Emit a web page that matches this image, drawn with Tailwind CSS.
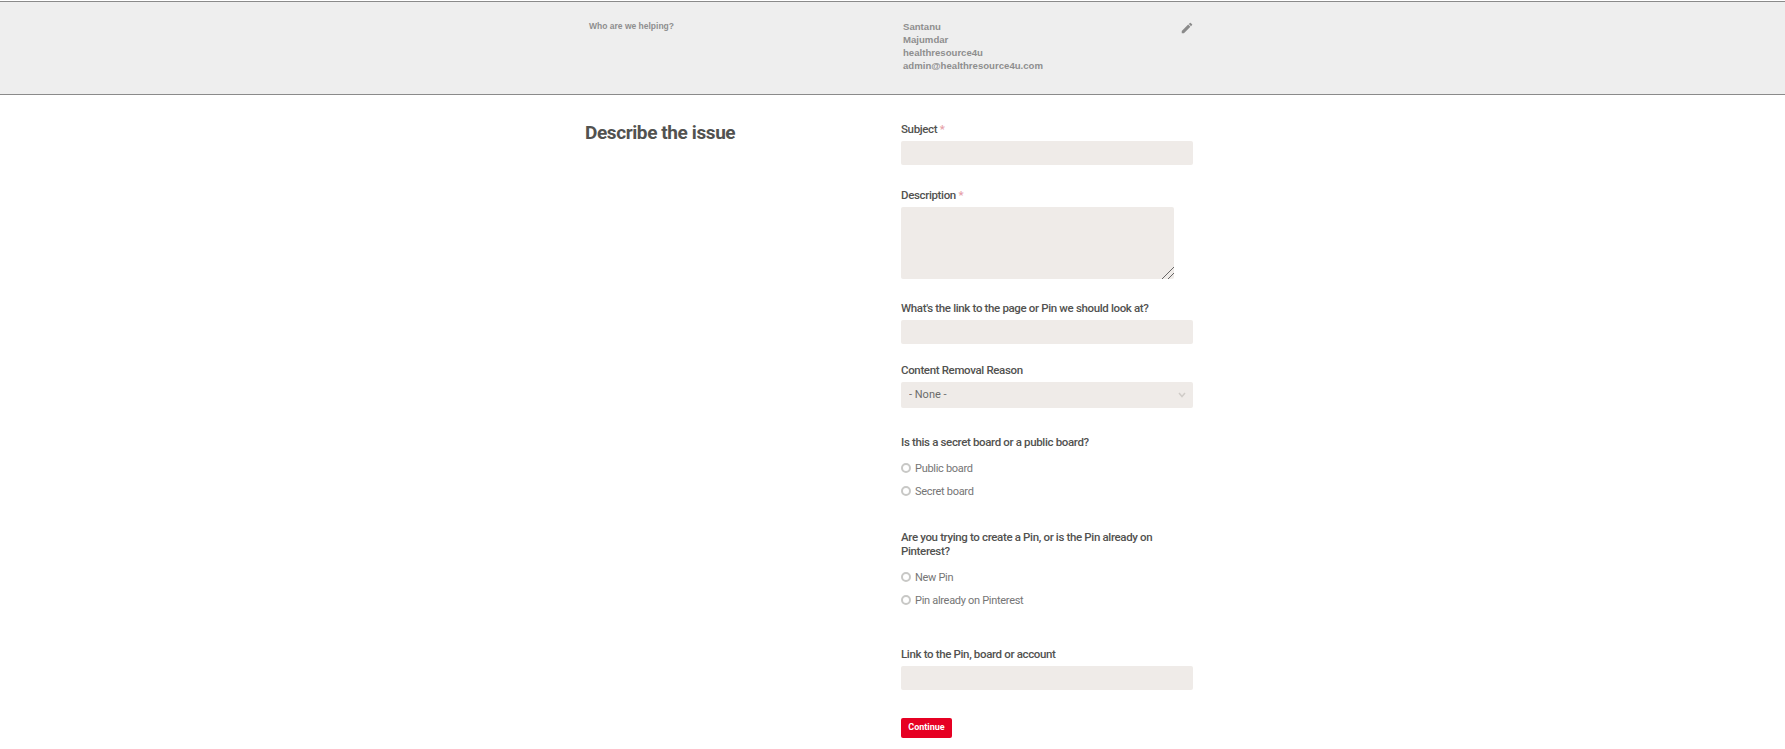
<!DOCTYPE html>
<html lang="en">
<head>
    <meta charset="UTF-8">
    <title>Describe the issue</title>
    <script src="https://cdn.jsdelivr.net/npm/@tailwindcss/browser@4"></script>
</head>
<body class="h-screen overflow-hidden bg-white font-['Roboto',Arial,sans-serif]">
    <!-- Who are we helping -->
    <div class="mt-px h-[94px] border-y border-[#8a8a8a] bg-[#eeeeee]">
        <div class="ml-[585px] flex w-[608px] pt-[18px] font-['Liberation_Sans',Arial,sans-serif] text-[9.6px] font-bold leading-[13px] text-[#8e8e8e]">
            <div class="w-[318px] pl-[4px] text-[8.5px]">Who are we helping?</div>
            <div class="flex-1">
                <div>Santanu</div>
                <div>Majumdar</div>
                <div>healthresource4u</div>
                <div>admin@healthresource4u.com</div>
            </div>
            <svg class="mt-[1px] mr-[-1px] h-[14px] w-[14px] fill-[#8a8a8a]" viewBox="0 0 24 24"><path d="M3 17.25V21h3.75L17.81 9.94l-3.75-3.75L3 17.25zM20.71 7.04a1 1 0 0 0 0-1.41l-2.34-2.34a1 1 0 0 0-1.41 0l-1.83 1.83 3.75 3.75 1.83-1.83z"/></svg>
        </div>
    </div>

    <!-- Form -->
    <div class="ml-[585px] flex w-[608px]">
        <h1 class="mt-[27px] w-[316px] text-[19px] leading-[22px] font-bold tracking-[-0.4px] text-[#525250]">Describe the issue</h1>
        <form class="w-[292px] pt-[26px] text-[11.5px] tracking-[-0.35px] text-[#525250]">
            <label class="block leading-4 font-medium">Subject <span class="text-[#e6a0a8]">*</span></label>
            <input type="text" class="mt-1 block h-6 w-full rounded-[2px] bg-[#efebe8]">

            <label class="mt-[22px] block leading-4 font-medium">Description <span class="text-[#e6a0a8]">*</span></label>
            <div class="relative mt-1 h-[72px] w-[273px]">
                <textarea class="block h-full w-full resize-none rounded-[2px] bg-[#efebe8]"></textarea>
                <svg class="absolute right-0 bottom-0 h-3 w-3 stroke-[#444] stroke-[0.8]" viewBox="0 0 12 12"><path d="M0 12L12 0M6 12l6-6"/></svg>
            </div>

            <label class="mt-[21px] block leading-4 font-medium">What's the link to the page or Pin we should look at?</label>
            <input type="text" class="mt-1 block h-6 w-full rounded-[2px] bg-[#efebe8]">

            <label class="mt-[18px] block leading-4 font-medium">Content Removal Reason</label>
            <div class="relative mt-1">
                <select class="block h-[26px] w-full appearance-none rounded-[2px] bg-[#efebe8] pl-2 text-[11px] tracking-normal text-[#6b6b6b]">
                    <option>- None -</option>
                </select>
                <svg class="absolute top-[10px] right-[7px] h-[6px] w-[8px] fill-none stroke-[#d0ccc8] stroke-[1.5]" viewBox="0 0 8 6"><path d="M1 1l3 3.5L7 1"/></svg>
            </div>

            <div class="mt-[26px] leading-4 font-medium">Is this a secret board or a public board?</div>
            <div class="mt-[9px] flex h-5 items-center gap-[4px] text-[11px] tracking-[-0.3px] text-[#757575]">
                <input type="radio" name="board" class="mb-[2px] h-[10px] w-[10px] appearance-none rounded-full border-2 border-[#c8c8c6]">Public board
            </div>
            <div class="mt-[3px] flex h-5 items-center gap-[4px] text-[11px] tracking-[-0.3px] text-[#757575]">
                <input type="radio" name="board" class="mb-[2px] h-[10px] w-[10px] appearance-none rounded-full border-2 border-[#c8c8c6]">Secret board
            </div>

            <div class="mt-[28px] leading-[14px] font-medium">Are you trying to create a Pin, or is the Pin already on Pinterest?</div>
            <div class="mt-[10px] flex h-5 items-center gap-[4px] text-[11px] tracking-[-0.3px] text-[#757575]">
                <input type="radio" name="pin" class="mb-[2px] h-[10px] w-[10px] appearance-none rounded-full border-2 border-[#c8c8c6]">New Pin
            </div>
            <div class="mt-[3px] flex h-5 items-center gap-[4px] text-[11px] tracking-[-0.3px] text-[#757575]">
                <input type="radio" name="pin" class="mb-[2px] h-[10px] w-[10px] appearance-none rounded-full border-2 border-[#c8c8c6]">Pin already on Pinterest
            </div>

            <label class="mt-[35px] block leading-4 font-medium">Link to the Pin, board or account</label>
            <input type="text" class="mt-1 block h-6 w-full rounded-[2px] bg-[#efebe8]">

            <button type="button" class="mt-7 block h-5 w-[51px] rounded-[2px] bg-[#e60023] text-[9px] font-bold tracking-normal text-white">Continue</button>
        </form>
    </div>
</body>
</html>
